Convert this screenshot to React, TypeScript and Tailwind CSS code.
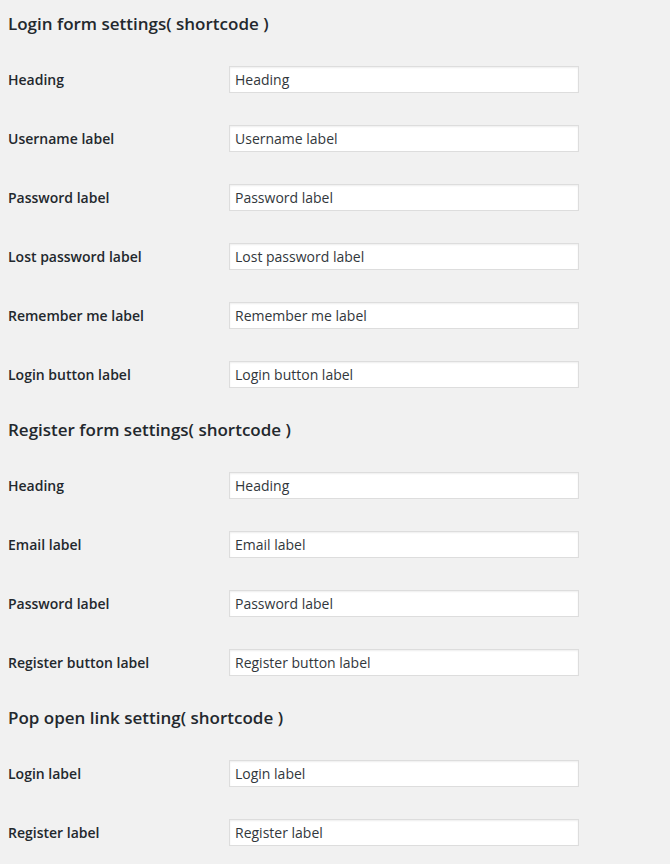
const sections = [
  {
    title: "Login form settings( shortcode )",
    fields: [
      "Heading",
      "Username label",
      "Password label",
      "Lost password label",
      "Remember me label",
      "Login button label",
    ],
  },
  {
    title: "Register form settings( shortcode )",
    fields: ["Heading", "Email label", "Password label", "Register button label"],
  },
  {
    title: "Pop open link setting( shortcode )",
    fields: ["Login label", "Register label"],
  },
]

function FieldRow({ label }: { label: string }) {
  return (
    <div className="flex h-[59px] items-center">
      <label className="w-[229px] shrink-0 pl-2 text-[14px] font-semibold text-[#23282d]">{label}</label>
      <input
        type="text"
        defaultValue={label}
        className="h-[27px] w-[350px] border border-[#dddddd] bg-white px-[5px] text-[14px] text-[#32373c] shadow-[inset_0_1px_2px_rgba(0,0,0,0.07)] outline-none"
      />
    </div>
  )
}

export default function App() {
  return (
    <div
      className="flex min-h-[864px] w-[670px] flex-col gap-[2px] bg-[#f1f1f1]"
      style={{ fontFamily: '"Open Sans", "Noto Sans", sans-serif' }}
    >
      {sections.map((section) => (
        <section key={section.title}>
          <h2 className="flex h-[48px] items-center pl-2 text-[17px] font-semibold text-[#23282d]">
            {section.title}
          </h2>
          <div className="mt-[2px]">
            {section.fields.map((field) => (
              <FieldRow key={field} label={field} />
            ))}
          </div>
        </section>
      ))}
    </div>
  )
}
